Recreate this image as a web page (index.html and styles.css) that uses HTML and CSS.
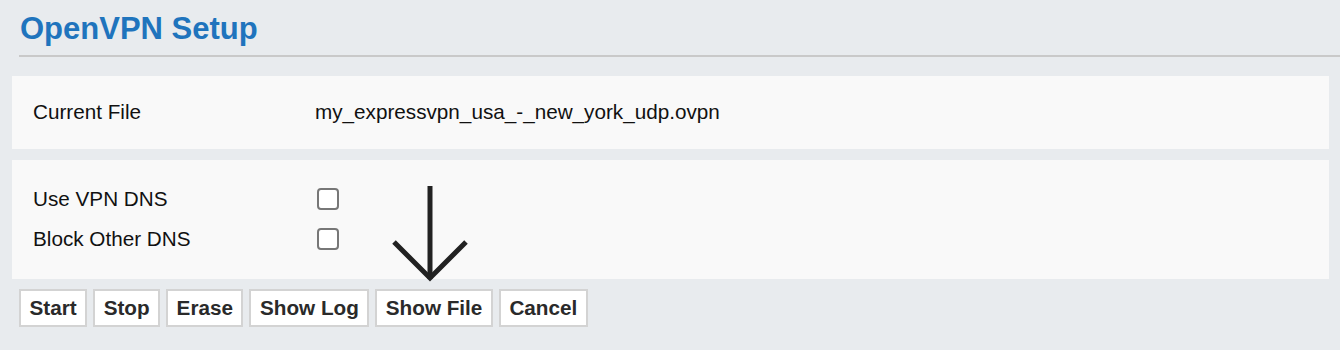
FILE: index.html
```html
<!DOCTYPE html>
<html lang="en">
<head>
  <meta charset="UTF-8">
  <title>OpenVPN Setup</title>
  <link rel="stylesheet" href="styles.css">
</head>
<body>
  <div class="page">
    <h1 class="title">OpenVPN Setup</h1>

    <div class="content">
      <div class="panel panel-file">
        <div class="row">
          <span class="label">Current File</span>
          <span class="value">my_expressvpn_usa_-_new_york_udp.ovpn</span>
        </div>
      </div>

      <div class="panel panel-opts">
        <div class="row">
          <label class="label" for="vpn-dns">Use VPN DNS</label>
          <input type="checkbox" id="vpn-dns" class="check">
        </div>
        <div class="row">
          <label class="label" for="block-dns">Block Other DNS</label>
          <input type="checkbox" id="block-dns" class="check">
        </div>
      </div>

      <div class="buttons">
        <button class="btn">Start</button>
        <button class="btn">Stop</button>
        <button class="btn">Erase</button>
        <button class="btn">Show Log</button>
        <button class="btn">Show File</button>
        <button class="btn">Cancel</button>
      </div>
    </div>

    <!-- pointer arrow drawn over the options panel -->
    <svg class="arrow" width="80" height="100" viewBox="0 0 80 100">
      <path d="M38 0 V93" stroke="#222" stroke-width="5" fill="none"/>
      <path d="M2 56 L38 92 L74 56" stroke="#222" stroke-width="5" fill="none"/>
    </svg>
  </div>
</body>
</html>
```

FILE: styles.css
```css
body {
  margin: 0;
  background: #e8ebee;
  font-family: "Liberation Sans", Arial, Helvetica, sans-serif;
  color: #111;
}

.page {
  position: relative;
  height: 350px;
}

.title {
  margin: 0 0 0 19px;
  padding: 13px 0 10px 1px;
  font-size: 31px;
  line-height: 32px;
  font-weight: bold;
  color: #1f74bd;
  border-bottom: 2px solid #c9c9c9;
}

.content {
  margin: 19px 11px 0 12px;
}

.panel {
  background: #f9f9f9;
  padding: 0 21px;
}

.panel-file {
  padding-top: 16px;
  padding-bottom: 17px;
}

.panel-opts {
  margin-top: 11px;
  padding-top: 19px;
  padding-bottom: 20px;
}

.row {
  display: flex;
  align-items: center;
  height: 40px;
  font-size: 20.7px;
}

.label {
  width: 282px;
}

.check {
  appearance: none;
  -webkit-appearance: none;
  margin: 0 0 0 2px;
  width: 22px;
  height: 22px;
  border: 2px solid #777;
  border-radius: 4px;
  background: #fff;
}

.buttons {
  display: flex;
  gap: 6px;
  margin: 10px 0 0 7px;
}

.btn {
  font-family: inherit;
  font-size: 20.7px;
  font-weight: bold;
  color: #2a2a2a;
  background: #fff;
  border: 2px solid #d3d3d3;
  padding: 0 8.5px;
  height: 38px;
  border-radius: 0;
}

.arrow {
  position: absolute;
  left: 392px;
  top: 186px;
}
```
